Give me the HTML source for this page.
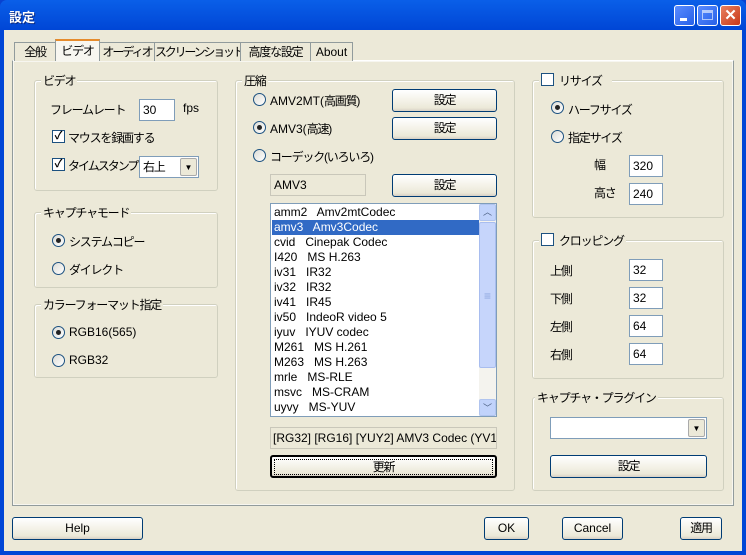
<!DOCTYPE html><html><head><meta charset="utf-8"><style>
*{box-sizing:border-box}
body{margin:0;width:746px;height:555px;overflow:hidden;background:#0842d0;font-family:"Liberation Sans","Noto Sans CJK JP",sans-serif;font-size:12px;color:#000}
.a{position:absolute}
.j{letter-spacing:-1.2px}
#win{position:absolute;left:0;top:0;width:746px;height:555px;border-radius:7px 7px 0 0;background:linear-gradient(#0a5fe8,#0046d6 30px);}
#client{position:absolute;left:4px;top:30px;right:4px;bottom:4px;background:#ece9d8}
.title{left:9px;top:7px;color:#fff;font-weight:bold;font-size:13px;text-shadow:1px 1px #0a2a80}
.tb{top:5px;width:21px;height:21px;border:1px solid #fff;border-radius:3px;background:linear-gradient(135deg,#5a8cff,#2760e8)}
.grp{position:absolute;border:1px solid #d0d0bf;border-radius:3px;box-shadow:inset 1px 1px #fff}
.lg{position:absolute;top:-9px;left:6px;background:#ece9d8;padding:0 2px;white-space:nowrap}
.btn{position:absolute;border:1px solid #003c74;border-radius:3px;background:linear-gradient(#fff,#ece9d8 85%,#d6d0c5);text-align:center;line-height:20px;height:23px}
.ed{position:absolute;border:1px solid #7f9db9;background:#fff;height:22px;padding:3px 3px;line-height:15px}
.rd{position:absolute;width:13px;height:13px;border:1px solid #1c5180;border-radius:50%;background:linear-gradient(135deg,#dcdcd6,#fff)}
.rd.on::after{content:"";position:absolute;left:3px;top:3px;width:5px;height:5px;border-radius:50%;background:#222}
.cb{position:absolute;width:13px;height:13px;border:1px solid #1c5180;background:#fff;font-size:11px;line-height:11px;text-align:center;font-weight:bold}
.t{position:absolute;white-space:nowrap}
.dd{position:absolute;right:1px;top:1px;bottom:1px;width:17px;background:#c1d3fb;border:1px solid #b0c4ef;border-radius:2px;font-size:8px;text-align:center;line-height:17px;color:#4d6185}
.tab{position:absolute;top:42px;height:19px;border:1px solid #919b9c;border-bottom:none;background:#ece9d8;text-align:center;line-height:18px;white-space:nowrap;overflow:hidden}
</style></head><body><div id="win">
<div class="a title">設定</div>
<div class="a tb" style="left:674px"><div class="a" style="left:5px;top:12px;width:7px;height:3px;background:#fff"></div></div>
<div class="a tb" style="left:697px"><div class="a" style="left:4px;top:4px;width:11px;height:10px;border:1px solid #fff;border-top-width:3px;opacity:.6"></div></div>
<div class="a tb" style="left:720px;background:linear-gradient(135deg,#e88060,#c83818);color:#fff;font-weight:bold;font-size:15px;text-align:center;line-height:19px">✕</div>
<div id="client"></div>
<div class="a" style="left:12px;top:60px;width:722px;height:446px;border:1px solid #919b9c;background:#f7f6f0;border-top-color:#fff"></div>
<div class="tab j" style="left:14px;width:42px">全般</div>
<div class="tab j" style="left:55px;top:39px;width:45px;height:22px;border-top:2px solid #e68b2c;background:#f7f6f0;line-height:20px">ビデオ</div>
<div class="tab j" style="left:99px;width:56px;letter-spacing:-2px">オーディオ</div>
<div class="tab j" style="left:154px;width:87px;letter-spacing:-2.2px">スクリーンショット</div>
<div class="tab j" style="left:240px;width:71px">高度な設定</div>
<div class="tab" style="left:310px;width:43px">About</div>
<div class="a" style="left:14px;top:62px;width:718px;height:442px;background:#ece9d8"></div>
<div class="grp" style="left:34px;top:80px;width:184px;height:111px"><span class="lg j">ビデオ</span></div>
<div class="t j" style="left:50px;top:101px">フレームレート</div>
<div class="ed" style="left:139px;top:99px;width:36px">30</div>
<div class="t" style="left:183px;top:101px">fps</div>
<div class="cb" style="left:52px;top:130px">✓</div><div class="t j" style="left:68px;top:129px">マウスを録画する</div>
<div class="cb" style="left:52px;top:158px">✓</div><div class="t j" style="left:68px;top:157px;letter-spacing:-2px">タイムスタンプ</div>
<div class="ed j" style="left:139px;top:156px;width:60px">右上<div class="dd" style="background:#ece9d8;border-color:#aaa;color:#000;letter-spacing:0">▼</div></div>
<div class="grp" style="left:34px;top:212px;width:184px;height:76px"><span class="lg j">キャプチャモード</span></div>
<div class="rd on" style="left:52px;top:234px"></div><div class="t j" style="left:69px;top:233px">システムコピー</div>
<div class="rd" style="left:52px;top:262px"></div><div class="t j" style="left:69px;top:261px">ダイレクト</div>
<div class="grp" style="left:34px;top:304px;width:184px;height:74px"><span class="lg j">カラーフォーマット指定</span></div>
<div class="rd on" style="left:52px;top:326px"></div><div class="t" style="left:69px;top:325px">RGB16(565)</div>
<div class="rd" style="left:52px;top:354px"></div><div class="t" style="left:69px;top:353px">RGB32</div>
<div class="grp" style="left:235px;top:80px;width:280px;height:411px"><span class="lg j">圧縮</span></div>
<div class="rd" style="left:253px;top:93px"></div><div class="t" style="left:270px;top:92px">AMV2MT(<span class="j">高画質</span>)</div>
<div class="rd on" style="left:253px;top:121px"></div><div class="t" style="left:270px;top:120px">AMV3(<span class="j">高速</span>)</div>
<div class="rd" style="left:253px;top:149px"></div><div class="t j" style="left:270px;top:148px">コーデック(いろいろ)</div>
<div class="btn j" style="left:392px;top:89px;width:105px">設定</div>
<div class="btn j" style="left:392px;top:117px;width:105px">設定</div>
<div class="btn j" style="left:392px;top:174px;width:105px">設定</div>
<div class="ed" style="left:270px;top:174px;width:96px;background:#ece9d8;border-color:#c9c7ba">AMV3</div>
<div class="a" style="left:270px;top:203px;width:227px;height:214px;border:1px solid #7f9db9;background:#fff;line-height:15px;padding:1px 0 0 3px">
<div>amm2 &nbsp; Amv2mtCodec</div>
<div style="background:#316ac5;color:#fff;margin-left:-2px;padding-left:2px;width:208px">amv3 &nbsp; Amv3Codec</div>
<div>cvid &nbsp; Cinepak Codec</div><div>I420 &nbsp; MS H.263</div><div>iv31 &nbsp; IR32</div><div>iv32 &nbsp; IR32</div><div>iv41 &nbsp; IR45</div><div>iv50 &nbsp; IndeoR video 5</div><div>iyuv &nbsp; IYUV codec</div><div>M261 &nbsp; MS H.261</div><div>M263 &nbsp; MS H.263</div><div>mrle &nbsp; MS-RLE</div><div>msvc &nbsp; MS-CRAM</div><div>uyvy &nbsp; MS-YUV</div>
<div class="a" style="right:0;top:0;width:17px;height:212px;background:#f4f3ee">
<div class="a" style="left:0;top:0;width:17px;height:17px;background:#c1d3fb;border:1px solid #b0c4ef;border-radius:2px;font-size:9px;text-align:center;color:#4d6185">︿</div>
<div class="a" style="left:0;top:18px;width:17px;height:146px;background:#c6d5fb;border:1px solid #a8bdef;border-radius:2px;color:#8fa7df;text-align:center;line-height:146px">≡</div>
<div class="a" style="left:0;bottom:0;width:17px;height:17px;background:#c1d3fb;border:1px solid #b0c4ef;border-radius:2px;font-size:9px;text-align:center;color:#4d6185;line-height:17px">﹀</div>
</div></div>
<div class="ed" style="left:270px;top:427px;width:227px;background:#ece9d8;border-color:#c9c7ba;overflow:hidden;white-space:nowrap;padding-left:2px">[RG32] [RG16] [YUY2] AMV3 Codec (YV12</div>
<div class="btn j" style="left:270px;top:455px;width:227px;border:2px solid #000;line-height:18px"><div style="margin:2px;border:1px dotted #000;line-height:14px">更新</div></div>
<div class="grp" style="left:532px;top:80px;width:192px;height:138px"><span class="lg j" style="left:6px;padding:0 10px 0 20px">リサイズ</span></div>
<div class="cb" style="left:541px;top:73px"></div>
<div class="rd on" style="left:551px;top:101px"></div><div class="t j" style="left:568px;top:101px">ハーフサイズ</div>
<div class="rd" style="left:551px;top:130px"></div><div class="t j" style="left:568px;top:129px">指定サイズ</div>
<div class="t j" style="left:594px;top:156px">幅</div><div class="ed" style="left:629px;top:155px;width:34px">320</div>
<div class="t j" style="left:594px;top:184px">高さ</div><div class="ed" style="left:629px;top:183px;width:34px">240</div>
<div class="grp" style="left:532px;top:240px;width:192px;height:139px"><span class="lg j" style="left:6px;padding:0 2px 0 20px">クロッピング</span></div>
<div class="cb" style="left:541px;top:233px"></div>
<div class="t j" style="left:550px;top:262px">上側</div><div class="ed" style="left:629px;top:259px;width:34px">32</div>
<div class="t j" style="left:550px;top:290px">下側</div><div class="ed" style="left:629px;top:287px;width:34px">32</div>
<div class="t j" style="left:550px;top:318px">左側</div><div class="ed" style="left:629px;top:315px;width:34px">64</div>
<div class="t j" style="left:550px;top:346px">右側</div><div class="ed" style="left:629px;top:343px;width:34px">64</div>
<div class="grp" style="left:532px;top:397px;width:192px;height:94px"><span class="lg j" style="left:2px">キャプチャ・プラグイン</span></div>
<div class="ed" style="left:550px;top:417px;width:157px"><div class="dd" style="background:#ece9d8;border-color:#aaa;color:#000">▼</div></div>
<div class="btn j" style="left:550px;top:455px;width:157px">設定</div>
<div class="btn" style="left:12px;top:517px;width:131px">Help</div>
<div class="btn" style="left:484px;top:517px;width:45px">OK</div>
<div class="btn" style="left:562px;top:517px;width:61px">Cancel</div>
<div class="btn j" style="left:680px;top:517px;width:42px">適用</div>
</div></body></html>
